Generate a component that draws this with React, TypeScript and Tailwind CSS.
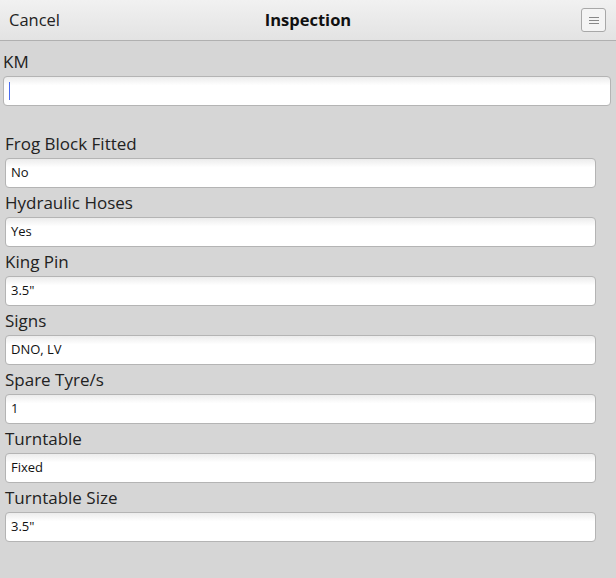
const fields = [
  { label: "Frog Block Fitted", value: "No" },
  { label: "Hydraulic Hoses", value: "Yes" },
  { label: "King Pin", value: '3.5"' },
  { label: "Signs", value: "DNO, LV" },
  { label: "Spare Tyre/s", value: "1" },
  { label: "Turntable", value: "Fixed" },
  { label: "Turntable Size", value: '3.5"' },
];

const font = { fontFamily: '"Open Sans", "Noto Sans", sans-serif' };

const FieldBox = ({ value, cursor }: { value?: string; cursor?: boolean }) => (
  <div className="h-[30px] rounded-[4px] border border-[#b4b4b4] bg-gradient-to-b from-[#ececec] via-white via-[30%] to-white flex items-center px-[5px] text-[13px] text-[#111]">
    {cursor ? <span className="w-px h-[18px] bg-[#4a6cf0]" /> : value}
  </div>
);

export default function App() {
  return (
    <div className="w-[616px] h-[578px] bg-[#d6d6d6] overflow-hidden" style={font}>
      {/* Top bar */}
      <div className="h-[41px] border-b border-[#b0b0b0] bg-gradient-to-b from-[#f1f1f1] to-[#e3e3e3] flex items-center justify-between px-[9px] relative">
        <span className="text-[16.5px] text-[#222]">Cancel</span>
        <span className="absolute left-0 right-0 text-center text-[16.5px] font-bold text-[#111] pointer-events-none">
          Inspection
        </span>
        <button className="w-[25px] h-[24px] rounded-[3px] border border-[#a8a8a8] bg-[#f4f4f4] flex flex-col items-center justify-center gap-[2px] mr-[1px]">
          <span className="w-[10px] h-px bg-[#888]" />
          <span className="w-[10px] h-px bg-[#888]" />
          <span className="w-[10px] h-px bg-[#888]" />
        </button>
      </div>

      {/* KM */}
      <div className="pt-[6px] pl-[3px] pr-[5px]">
        <div className="h-[29px] flex items-center text-[17px] text-[#222]">KM</div>
        <FieldBox cursor />
      </div>

      {/* Inspection fields */}
      <div className="pt-[23px] pl-[5px] pr-[20px]">
        {fields.map((f) => (
          <div key={f.label}>
            <div className="h-[29px] flex items-center text-[17px] text-[#222]">{f.label}</div>
            <FieldBox value={f.value} />
          </div>
        ))}
      </div>
    </div>
  );
}
